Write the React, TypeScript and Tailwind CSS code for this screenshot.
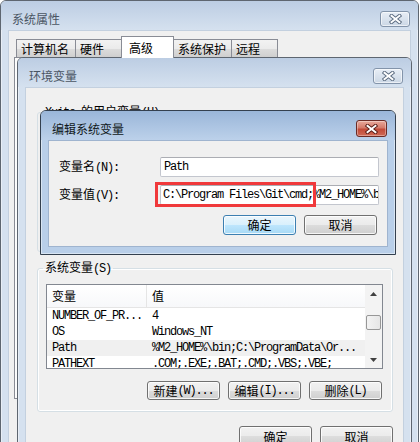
import type { ReactNode } from 'react';

const cjk = "font-['Noto_Sans_CJK_SC',sans-serif]";
const mono = "font-['Liberation_Mono','Noto_Sans_CJK_SC',monospace] text-[12px] tracking-[-1.2px]";

// SimSun-like: ascii runs in half-width mono, CJK in Noto
const Mixed = ({ text }: { text: string }) => {
  const parts = text.split(/([\x20-\x7e]+)/).filter(Boolean);
  return (
    <>
      {parts.map((p, i) =>
        /^[\x20-\x7e]+$/.test(p) ? (
          <span key={i} className={mono}>
            {p}
          </span>
        ) : (
          <span key={i}>{p}</span>
        ),
      )}
    </>
  );
};

const CloseButton = ({ active }: { active?: boolean }) => (
  <div
    className={
      active
        ? 'flex h-[17px] w-[31px] items-center justify-center rounded-[3px] border border-[#6b2b25] bg-[linear-gradient(#e9a99b_0%,#d47a6a_45%,#c24a38_55%,#cf6a56_100%)] shadow-[inset_0_0_0_1px_rgba(255,255,255,0.35)]'
        : 'flex h-[16px] w-[30px] items-center justify-center rounded-[3px] border border-[#8394aa] bg-[linear-gradient(#e8eef6,#cbd7e5)] shadow-[inset_0_0_0_1px_rgba(255,255,255,0.6)]'
    }
  >
    <svg width="13" height="10" viewBox="0 0 13 10">
      <path
        d="M2.5 1.8 L10.5 8.2 M10.5 1.8 L2.5 8.2"
        stroke={active ? '#5a1e18' : '#5d6d82'}
        strokeWidth="3.8"
        strokeLinecap="square"
      />
      <path
        d="M2.5 1.8 L10.5 8.2 M10.5 1.8 L2.5 8.2"
        stroke="#ffffff"
        strokeWidth="1.9"
        strokeLinecap="square"
      />
    </svg>
  </div>
);

const Win = ({
  title,
  active,
  className,
  children,
}: {
  title: string;
  active?: boolean;
  className: string;
  children: ReactNode;
}) => (
  <div
    className={`absolute flex flex-col overflow-hidden rounded-t-[6px] border shadow-[inset_0_0_0_1px_rgba(255,255,255,0.45)] ${
      active ? 'border-[#34404f] bg-[#b9cfe9]' : 'border-[#5e6670] bg-[#d5e1ef]'
    } ${className}`}
  >
    <div
      className={`flex h-[29px] shrink-0 items-start justify-between pl-[11px] pr-[8px] ${
        active ? 'bg-[linear-gradient(#9ab6d9,#bcd1ea)] pt-[9px]' : 'bg-[linear-gradient(#bccde3,#d5e1ef)] pt-[10px]'
      }`}
    >
      <span
        className={`flex items-center leading-[16px] ${active ? 'h-[17px] text-[#101820]' : 'h-[16px] text-[#4a5563]'}`}
      >
        {title}
      </span>
      <CloseButton active={active} />
    </div>
    <div
      className={`mx-[7px] mb-[7px] flex-1 border bg-[#f0f0f0] ${active ? 'border-[#9fb4cf]' : 'border-[#c3d0df]'}`}
    >
      {children}
    </div>
  </div>
);

const Btn = ({ label, primary, className }: { label: string; primary?: boolean; className: string }) => (
  <div
    className={`flex items-center justify-center rounded-[3px] border leading-[16px] shadow-[inset_0_0_0_1px_rgba(255,255,255,0.8)] ${
      primary
        ? 'border-[#3c7fb1] bg-[linear-gradient(#eaf6fd_0%,#d9f0fc_50%,#bee6fd_50%,#a7d9f5_100%)]'
        : 'border-[#707070] bg-[linear-gradient(#f2f2f2_0%,#ebebeb_50%,#dddddd_50%,#cfcfcf_100%)]'
    } ${className}`}
  >
    <Mixed text={label} />
  </div>
);

const tabs = [
  { label: '计算机名', w: 'w-[60px]' },
  { label: '硬件', w: 'w-[47px]' },
  { label: '高级', w: 'w-[53px]', selected: true },
  { label: '系统保护', w: 'w-[59px]' },
  { label: '远程', w: 'w-[47px]' },
];

const sysVars = [
  { name: 'NUMBER_OF_PR...', value: '4' },
  { name: 'OS', value: 'Windows_NT' },
  { name: 'Path', value: '%M2_HOME%\\bin;C:\\ProgramData\\Or...', hover: true },
  { name: 'PATHEXT', value: '.COM;.EXE;.BAT;.CMD;.VBS;.VBE;' },
];

const Arrow = ({ up }: { up?: boolean }) => (
  <svg width="7" height="4" viewBox="0 0 7 4">
    <path d={up ? 'M0 4 L3.5 0 L7 4 Z' : 'M0 0 L3.5 4 L7 0 Z'} fill="#404040" />
  </svg>
);

export default function App() {
  return (
    <div className={`relative h-[442px] w-[420px] overflow-hidden bg-white text-[12px] leading-[16px] text-black ${cjk}`}>
      {/* 系统属性 */}
      <Win title="系统属性" className="left-0 top-0 h-[480px] w-[419px]">
        <div className="flex flex-col pl-[5px] pt-[5px]">
          <div className="flex items-end pl-[2px]">
            {tabs.map((t, i) =>
              t.selected ? (
                <div
                  key={t.label}
                  className={`relative z-10 -mb-px -ml-px flex h-[22px] items-center border border-b-0 border-[#898c95] bg-white pl-[7px] ${t.w}`}
                >
                  {t.label}
                </div>
              ) : (
                <div
                  key={t.label}
                  className={`flex h-[18px] items-center border border-b-0 border-[#898c95] bg-[linear-gradient(#f2f2f2_0%,#ebebeb_50%,#dddddd_50%,#cfcfcf_100%)] pl-[4px] ${t.w} ${i > 0 ? '-ml-px' : ''}`}
                >
                  {t.label}
                </div>
              ),
            )}
          </div>
          <div className="h-[342px] w-[391px] border border-[#898c95] bg-[#fcfcfc]" />
        </div>
      </Win>

      {/* 环境变量 */}
      <Win title="环境变量" className="left-[17px] top-[57px] h-[420px] w-[395px]">
        <div className="flex flex-col">
          <fieldset className="mx-[10px] ml-[11px] mt-[15px] h-[149px] rounded-[3px] border border-[#d5dfe5]">
            <legend className="ml-[5px] px-[2px]">
              <Mixed text="Xuite 的用户变量(U)" />
            </legend>
          </fieldset>

          <fieldset className="ml-[11px] mr-[10px] mt-[7px] rounded-[3px] border border-[#d5dfe5] pb-[11px] shadow-[inset_0_0_0_1px_#ffffff]">
            <legend className="ml-[5px] px-[2px]">
              <Mixed text="系统变量(S)" />
            </legend>
            <div className="ml-[8px] mr-[9px] mt-[7px] flex h-[85px] border border-[#828790] bg-white">
              <div className="flex flex-1 flex-col overflow-hidden">
                <div className="flex h-[23px] shrink-0 border-b border-[#e5e5e5] bg-[linear-gradient(#ffffff,#f7f8fa)]">
                  <div className="flex w-[100px] items-center border-r border-[#e5e5e5] pl-[5px]">变量</div>
                  <div className="flex items-center pl-[5px]">值</div>
                </div>
                {sysVars.map(v => (
                  <div
                    key={v.name}
                    className={`flex h-[16px] shrink-0 items-center whitespace-nowrap ${v.hover ? 'bg-[#f0f0f0]' : ''}`}
                  >
                    <div className={`w-[100px] pl-[5px] ${mono}`}>{v.name}</div>
                    <div className={`pl-[5px] ${mono}`}>{v.value}</div>
                  </div>
                ))}
              </div>
              <div className="flex w-[17px] shrink-0 flex-col bg-[#f3f3f3]">
                <div className="flex h-[17px] items-center justify-center">
                  <Arrow up />
                </div>
                <div className="mx-px mt-[13px] h-[15px] rounded-[2px] border border-[#979797] bg-[linear-gradient(90deg,#f3f3f3,#e6e6e6)]" />
                <div className="flex-1" />
                <div className="flex h-[17px] items-center justify-center">
                  <Arrow />
                </div>
              </div>
            </div>
            <div className="mt-[12px] flex justify-end gap-[8px] pr-[10px]">
              <Btn label="新建(W)..." className="h-[19px] w-[73px]" />
              <Btn label="编辑(I)..." className="h-[19px] w-[73px]" />
              <Btn label="删除(L)" className="h-[19px] w-[73px]" />
            </div>
          </fieldset>

          <div className="mr-[10px] mt-[14px] flex justify-end gap-[8px]">
            <Btn label="确定" className="h-[21px] w-[73px]" />
            <Btn label="取消" className="h-[21px] w-[73px]" />
          </div>
        </div>
      </Win>

      {/* 编辑系统变量 */}
      <Win title="编辑系统变量" active className="left-[40px] top-[110px] h-[145px] w-[356px]">
        <div className="flex flex-col pl-[10px] pt-[16px]">
          <div className="flex h-[20px] items-center">
            <span className="w-[101px]">
              <Mixed text="变量名(N):" />
            </span>
            <div className="flex h-[20px] w-[219px] items-center rounded-[2px] border border-[#c3c6ce] border-t-[#abadb3] bg-white pl-[3px]">
              <span className={mono}>Path</span>
            </div>
          </div>
          <div className="mt-[8px] flex h-[20px] items-center">
            <span className="w-[101px]">
              <Mixed text="变量值(V):" />
            </span>
            <div className="relative flex h-[20px] w-[219px] items-center overflow-hidden rounded-[2px] border border-[#c3c6ce] border-t-[#abadb3] bg-white pl-[2px]">
              <span className={`whitespace-nowrap ${mono}`}>
                C:\Program Files\Git\cmd;%M2_HOME%\bin;C:\ProgramData
              </span>
            </div>
            <div className="pointer-events-none relative -ml-[224px] -mt-px h-[25px] w-[161px] border-[3px] border-[#f0393b]" />
          </div>
          <div className="mt-[10px] flex w-[320px] justify-end gap-[8px] pr-[2px]">
            <Btn label="确定" primary className="h-[20px] w-[73px]" />
            <Btn label="取消" className="h-[20px] w-[73px]" />
          </div>
        </div>
      </Win>
    </div>
  );
}
